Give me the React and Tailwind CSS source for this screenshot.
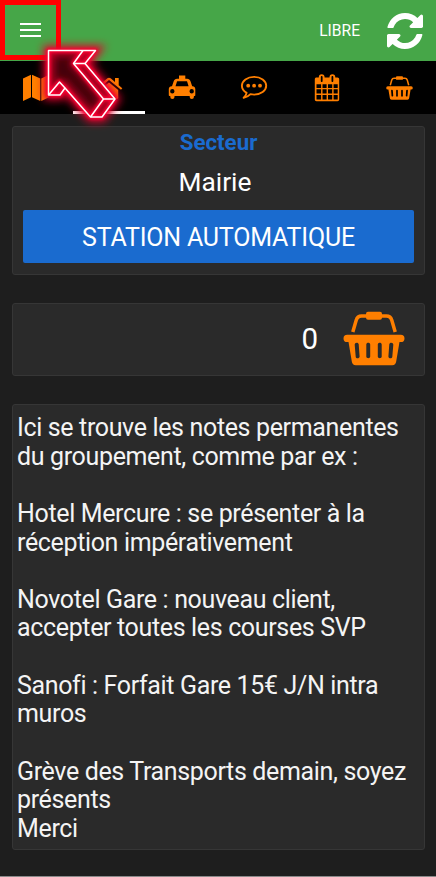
import { useState } from 'react';

const NOTES = `Ici se trouve les notes permanentes
du groupement, comme par ex :

Hotel Mercure : se présenter à la
réception impérativement

Novotel Gare : nouveau client,
accepter toutes les courses SVP

Sanofi : Forfait Gare 15€ J/N intra
muros

Grève des Transports demain, soyez
présents
Merci`;

function MapIcon() {
  return (
    <svg viewBox="0 0 26 28" className="w-[26px] h-[28px]" fill="currentColor">
      <path d="M0 4.500 8 .8V23.300L0 27zM9 .8 17.300 4.500V27L9 23.300zM18.300 4.500 26 .8V23.300L18.300 27z" />
    </svg>
  );
}

function HomeIcon() {
  return (
    <svg viewBox="0 0 28 24" className="w-[28px] h-[24px]" fill="currentColor">
      <path d="M14 6.500 4.800 14v7.700c0 .7.500 1.200 1.200 1.200h5.600v-6.500h4.800v6.500H22c.7 0 1.200-.5 1.200-1.200V14z" />
      <path d="m27.300 12.200-3.600-3V2h-3.700v4L15.600 2.300c-.9-.8-2.300-.8-3.200 0L.7 12.200l1.300 1.600L14 4l12 9.800z" />
    </svg>
  );
}

function TaxiIcon() {
  return (
    <svg viewBox="0 0 28 25" className="w-[28px] h-[25px]" fill="currentColor">
      <path
        fillRule="evenodd"
        d="M11 .4h6.300v3.400h1.800c1.700 0 2.900 1 3.400 2.500l1.700 5h.4c1.500 0 2.700 1.200 2.700 2.700v6.300c0 .4-.3.700-.7.700h-.7v.9a2.100 2.100 0 0 1-4.200 0V21H6.500v.9a2.100 2.100 0 0 1-4.200 0V21h-.8a.7.700 0 0 1-.7-.7V14c0-1.500 1.200-2.700 2.700-2.700H4l1.700-5c.5-1.500 1.700-2.500 3.400-2.500H11zM9 6.600 7.500 11.300h13.100L19.100 6.600c-.1-.3-.3-.4-.6-.4H9.600c-.3 0-.5.100-.6.400zM4.300 14a2.200 2.200 0 1 0 0 4.400 2.200 2.200 0 0 0 0-4.400zm19.400 0a2.200 2.200 0 1 0 0 4.400 2.200 2.200 0 0 0 0-4.400z"
      />
    </svg>
  );
}

function CommentIcon() {
  return (
    <svg viewBox="0 0 28 25" className="w-[28px] h-[25px]">
      <path
        d="M14.100 1.900C7.300 1.900 1.900 5.800 1.900 10.800c0 2.900 1.800 5.500 4.700 7.100-.4 1.900-1.300 3.500-2.900 4.900 2.600-.5 4.900-1.600 6.800-3.600 1.200.3 2.400.4 3.600.4 6.700 0 12.100-3.900 12.100-8.800s-5.400-8.900-12.100-8.900z"
        fill="none"
        stroke="currentColor"
        strokeWidth="1.900"
        strokeLinejoin="round"
      />
      <circle cx="8.200" cy="10.700" r="1.900" fill="currentColor" />
      <circle cx="14.100" cy="10.700" r="1.900" fill="currentColor" />
      <circle cx="20" cy="10.700" r="1.900" fill="currentColor" />
    </svg>
  );
}

function CalendarIcon() {
  return (
    <svg viewBox="0 0 26 28" className="w-[26px] h-[28px]">
      <path
        fill="currentColor"
        fillRule="evenodd"
        d="M2.500 3.600h2.300V3.200a2.900 2.900 0 0 1 5.800 0v.4h4.900v-.4a2.900 2.900 0 0 1 5.800 0v.4h2.200c1 0 1.700.8 1.700 1.700v20.300c0 1-.8 1.700-1.700 1.700h-21c-1 0-1.700-.8-1.700-1.700V5.300c0-1 .8-1.700 1.700-1.700zM6.800 3v4c0 .5.300.9.700.9h.4c.4 0 .7-.4.700-.9V3c0-.5-.3-.9-.7-.9h-.4c-.4 0-.7.4-.7.900zm10.700 0v4c0 .5.300.9.700.9h.4c.4 0 .7-.4.700-.9V3c0-.5-.3-.9-.7-.9h-.4c-.4 0-.7.4-.7.900zM2.500 10.200h4.600v3.700H2.500zm6 0h4.100v3.700H8.500zm5.500 0h4.200v3.700H14zm5.600 0h4.100v3.700h-4.100zM2.500 15.300h4.600v4.100H2.500zm6 0h4.100v4.100H8.500zm5.500 0h4.200v4.100H14zm5.600 0h4.100v4.100h-4.100zM2.500 20.900h4.600v4.700H2.500zm6 0h4.100v4.700H8.500zm5.500 0h4.200v4.700H14zm5.600 0h4.100v4.700h-4.100z"
      />
    </svg>
  );
}

function BasketIcon({ className }) {
  return (
    <svg viewBox="0 0 62 55" className={className}>
      <path
        d="M9.800 21 13.200 9.200C14 6.400 15.500 5 18.600 5h24.800c3.100 0 4.600 1.400 5.400 4.200L52.200 21"
        fill="none"
        stroke="currentColor"
        strokeWidth="3.500"
      />
      <rect x="23" y=".8" width="16" height="8" rx="2" fill="currentColor" />
      <path
        fill="currentColor"
        fillRule="evenodd"
        d="M4.200 23.700h53.600a3.700 3.700 0 0 1 0 7.400h-1.300l-3.300 19.500c-.4 2.400-1.600 3.700-4 3.700H12.800c-2.400 0-3.600-1.300-4-3.700L5.500 31.100H4.200a3.700 3.700 0 0 1 0-7.400zM11.700 33.700l1 12c.2 2.300 4 2 3.900-.2l-.9-12.200c-.2-2.400-4.200-2.100-4 .4zm11.600-.2v12.100c0 2.300 3.900 2.300 3.900 0V33.500c0-2.400-3.900-2.400-3.900 0zm11.500 0v12.100c0 2.300 3.900 2.300 3.900 0V33.500c0-2.400-3.900-2.400-3.900 0zm11.500-.2-.9 12.200c-.1 2.200 3.700 2.500 3.900.2l1-12c.2-2.500-3.800-2.800-4-.4z"
      />
    </svg>
  );
}

function RefreshIcon() {
  return (
    <svg viewBox="0 0 1536 1536" className="w-[36px] h-[36px]" fill="currentColor">
      <path d="M1511 928q0 5-1 7-64 268-268 434.500T764 1536q-146 0-282.500-55T238 1324l-129 129q-19 19-45 19t-45-19-19-45V960q0-26 19-45t45-19h448q26 0 45 19t19 45-19 45l-137 137q71 66 161 102t187 36q134 0 250-65t186-179q11-17 53-117 8-23 30-23h192q13 0 22.500 9.500t9.500 22.500zm25-800v448q0 26-19 45t-45 19h-448q-26 0-45-19t-19-45 19-45l138-138Q969 256 768 256q-134 0-250 65T332 500q-11 17-53 117-8 23-30 23H50q-13 0-22.500-9.500T18 608v-7q65-268 270-434.500T768 0q146 0 284 55.500T1297 212l130-129q19-19 45-19t45 19 19 45z" />
    </svg>
  );
}

const ARROW = 'M48.500 50.500H95.500L85 63.500 115 99 102 117H90.500L65 88 60 95H48.500z';
const ARROW_EDGES = 'M83 50.500 73.500 63.500H85M73.500 63.500 103.500 99H115M103.500 99 90.500 117M48.500 95 59.500 82 65 88';

// Flèche néon qui pointe vers le menu
function NeonArrow() {
  return (
    <svg viewBox="0 0 150 150" className="absolute left-0 top-0 w-[150px] h-[150px] pointer-events-none">
      <defs>
        <filter id="glow" x="-50%" y="-50%" width="200%" height="200%">
          <feGaussianBlur stdDeviation="4.500" />
        </filter>
        <filter id="glowTight" x="-50%" y="-50%" width="200%" height="200%">
          <feGaussianBlur stdDeviation="1.600" />
        </filter>
        <clipPath id="arrowClip">
          <path d={ARROW} />
        </clipPath>
      </defs>
      <path d={ARROW} fill="none" stroke="#e0002c" strokeWidth="10" filter="url(#glow)" />
      <path d={ARROW} fill="#43000b" />
      <g clipPath="url(#arrowClip)">
        <path d={ARROW} fill="none" stroke="#c80026" strokeWidth="10" filter="url(#glow)" />
        <path d={ARROW_EDGES} fill="none" stroke="#c80026" strokeWidth="5" filter="url(#glow)" />
      </g>
      <g fill="none" strokeLinejoin="round">
        <g stroke="#ff0031" strokeWidth="4.500" filter="url(#glowTight)">
          <path d={ARROW} />
          <path d={ARROW_EDGES} />
        </g>
        <g stroke="#ffffff" strokeWidth="1.500">
          <path d={ARROW} />
          <path d={ARROW_EDGES} />
        </g>
      </g>
    </svg>
  );
}

const TABS = [
  { id: 'carte', icon: <MapIcon /> },
  { id: 'accueil', icon: <HomeIcon /> },
  { id: 'courses', icon: <TaxiIcon /> },
  { id: 'messages', icon: <CommentIcon /> },
  { id: 'agenda', icon: <CalendarIcon /> },
  { id: 'panier', icon: <BasketIcon className="w-[27px] h-[24px]" /> },
];

const card = 'bg-[#2a2a2a] border border-[#363636] rounded-[3px]';

export default function App() {
  const [tab, setTab] = useState('accueil');

  return (
    <div className="relative w-[436px] h-[877px] overflow-hidden flex flex-col bg-[#1e1e1e] border-b border-[#8a8a8a] text-white font-['Roboto',sans-serif]">
      <header className="h-[61px] shrink-0 flex items-center bg-[#46a648]">
        <button className="w-[61px] h-[60px] self-start border-[5px] border-[#ff0000] flex flex-col items-center justify-center gap-1" aria-label="Menu">
          <span className="w-[21px] h-[2px] bg-white" />
          <span className="w-[21px] h-[2px] bg-white" />
          <span className="w-[21px] h-[2px] bg-white" />
        </button>
        <span className="ml-auto mr-[27px] pt-px text-[15.6px] leading-5">LIBRE</span>
        <button className="mr-[13px]" aria-label="Actualiser">
          <RefreshIcon />
        </button>
      </header>

      <nav className="h-[53px] shrink-0 grid grid-cols-6 bg-black text-[#ff7f00]">
        {TABS.map((t) => (
          <button
            key={t.id}
            onClick={() => setTab(t.id)}
            className={`flex items-center justify-center border-b-[3px] ${tab === t.id ? 'border-white' : 'border-transparent'} pt-[3px]`}
          >
            {t.icon}
          </button>
        ))}
      </nav>

      <main className="flex flex-col pl-3 pr-[11px] pt-3">
        <section className={`${card} h-[149px] px-[10px] flex flex-col items-center`}>
          <h2 className="mt-px text-[22.3px] leading-7 font-bold text-[#1a6bcf]">Secteur</h2>
          <p className="mt-[10px] pr-[7px] text-[26.3px] leading-8">Mairie</p>
          <button className="mt-3 w-full h-[53px] shrink-0 rounded-[2px] bg-[#1a6bcf] text-[25px] tracking-[-0.2px] leading-8 pt-[3px]">
            STATION AUTOMATIQUE
          </button>
        </section>

        <section className={`${card} mt-7 h-[73px] pr-[19px] pb-[3px] flex items-center justify-end`}>
          <span className="mr-[25px] pt-px text-[29.5px] leading-8">0</span>
          <BasketIcon className="w-[62px] h-[55px] text-[#ff7f00]" />
        </section>

        <section className={`${card} mt-7 h-[446px] pl-1 pt-[9px]`}>
          <p className="whitespace-pre text-[25px] tracking-[-0.35px] leading-[28.64px] text-[#f4f4f4]">{NOTES}</p>
        </section>
      </main>

      <NeonArrow />
    </div>
  );
}
